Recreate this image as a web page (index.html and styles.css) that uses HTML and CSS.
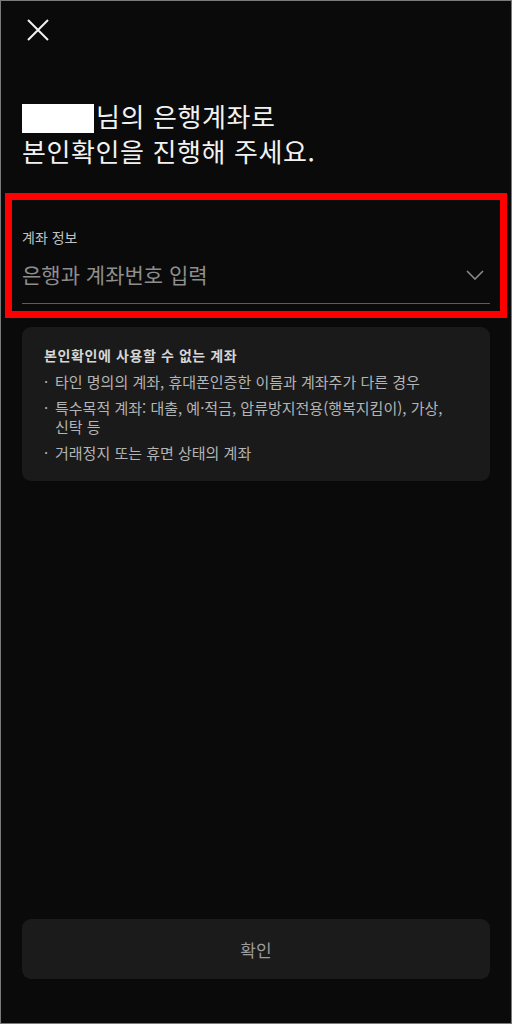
FILE: index.html
```html
<!DOCTYPE html>
<html lang="ko">
<head>
<meta charset="utf-8">
<title>본인확인</title>
<link rel="stylesheet" href="styles.css">
</head>
<body>
<div class="screen">
  <header class="top">
    <svg class="close" width="22" height="22" viewBox="0 0 22 22" aria-label="닫기">
      <path d="M1 1 L21 21 M21 1 L1 21" stroke="#f2f2f2" stroke-width="2" fill="none"/>
    </svg>
  </header>

  <h1 class="title"><span class="name-mask"></span>님의 은행계좌로<br>본인확인을 진행해 주세요.</h1>

  <section class="field">
    <div class="field-label">계좌 정보</div>
    <div class="field-row">
      <span class="placeholder">은행과 계좌번호 입력</span>
      <svg class="chevron" width="18" height="10" viewBox="0 0 18 10">
        <path d="M1 1 L9 9 L17 1" stroke="#8a8a8a" stroke-width="1.6" fill="none"/>
      </svg>
    </div>
  </section>

  <div class="notice">
    <div class="notice-title">본인확인에 사용할 수 없는 계좌</div>
    <ul class="notice-list">
      <li>타인 명의의 계좌, 휴대폰인증한 이름과 계좌주가 다른 경우</li>
      <li>특수목적 계좌: 대출, 예·적금, 압류방지전용(행복지킴이), 가상, 신탁 등</li>
      <li>거래정지 또는 휴면 상태의 계좌</li>
    </ul>
  </div>

  <button class="confirm" type="button">확인</button>
</div>
</body>
</html>
```

FILE: styles.css
```css
* { box-sizing: border-box; }
html, body {
  margin: 0;
  padding: 0;
  background: #0a0a0a;
}
body {
  font-family: "Noto Sans CJK KR", "Noto Sans", sans-serif;
}
.screen {
  width: 512px;
  height: 1024px;
  border: 1px solid #7a7a7a;
  padding: 0 21px;
  display: flex;
  flex-direction: column;
  background: #0a0a0a;
}
.top {
  padding-top: 18px;
  height: 40px;
}
.close {
  display: block;
  margin-left: 5px;
}
.title {
  margin: 57px 0 0;
  font-size: 26px;
  font-weight: 400;
  line-height: 35px;
  color: #f2f2f2;
  letter-spacing: 0.6px;
}
.name-mask {
  display: inline-block;
  width: 72px;
  height: 29px;
  background: #ffffff;
  vertical-align: -6px;
  margin-right: 2px;
}
.field {
  margin: 25px -17px 0;
  border: 7px solid #ff0000;
  padding: 27px 10px 7px;
}
.field-label {
  font-size: 14px;
  line-height: 20px;
  color: #c2c2c2;
}
.field-row {
  margin-top: 13px;
  display: flex;
  align-items: center;
  justify-content: space-between;
  padding-bottom: 15px;
  border-bottom: 1px solid #5c5c5c;
}
.placeholder {
  font-size: 21px;
  line-height: 28px;
  color: #8e8e8e;
}
.chevron {
  display: block;
  margin-right: 6px;
  margin-top: 2px;
}
.notice {
  margin-top: 9px;
  background: #1a1a1a;
  border-radius: 9px;
  padding: 18px 22px 19px;
}
.notice-title {
  font-size: 14px;
  font-weight: 700;
  line-height: 20px;
  color: #d6d6d6;
  letter-spacing: 0.6px;
}
.notice-list {
  list-style: none;
  margin: 7px 0 0;
  padding: 0;
}
.notice-list li {
  position: relative;
  padding-left: 11px;
  font-size: 15px;
  line-height: 19px;
  color: #b4b4b4;
  word-break: keep-all;
}
.notice-list li + li {
  margin-top: 7px;
}
.notice-list li::before {
  content: "·";
  position: absolute;
  left: 0;
  top: 0;
}
.confirm {
  margin-top: auto;
  margin-bottom: 44px;
  height: 60px;
  width: 100%;
  border: none;
  border-radius: 9px;
  background: #1b1b1b;
  color: #9c9c9c;
  font-family: inherit;
  font-size: 17px;
}
```
